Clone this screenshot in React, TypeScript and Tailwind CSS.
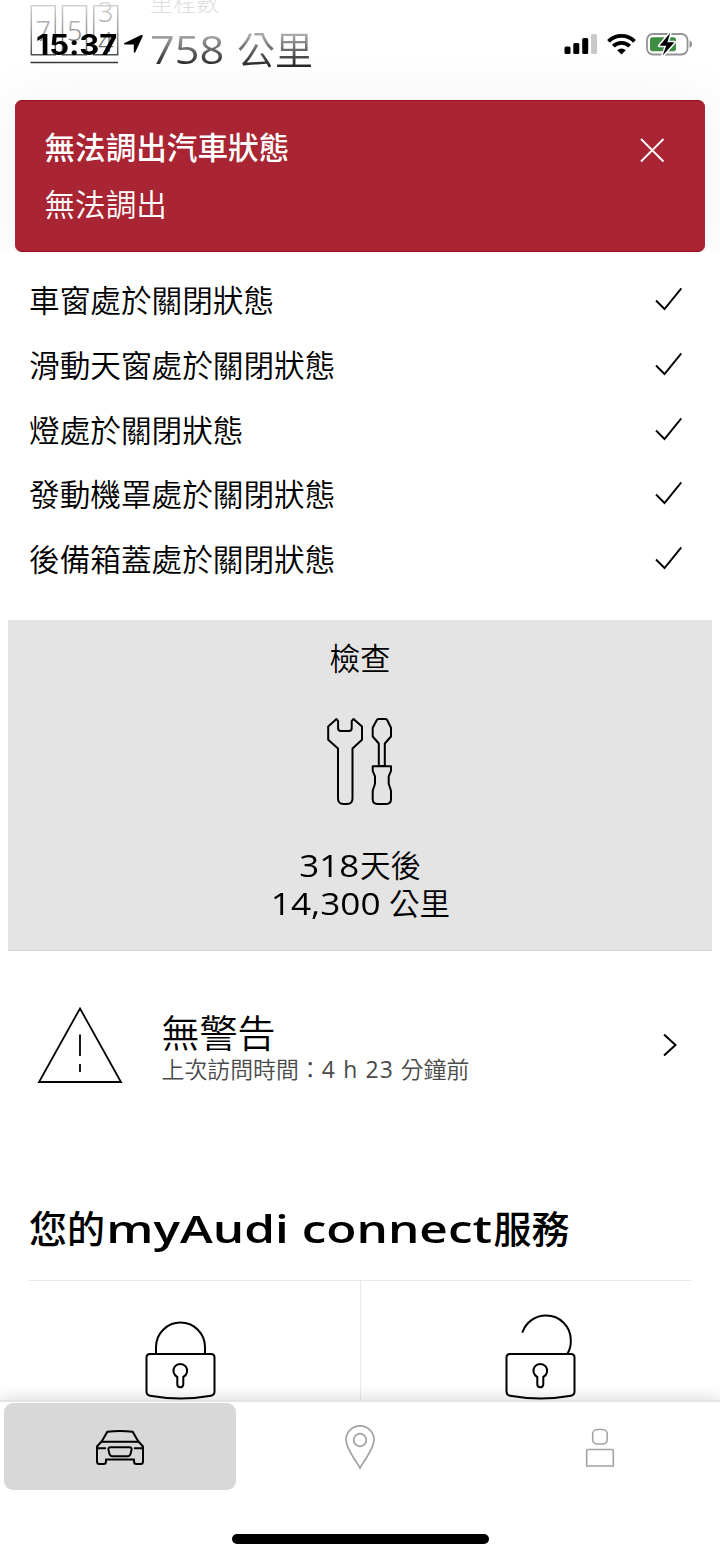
import type { ReactNode } from "react";

const statusItems = [
  "車窗處於關閉狀態",
  "滑動天窗處於關閉狀態",
  "燈處於關閉狀態",
  "發動機罩處於關閉狀態",
  "後備箱蓋處於關閉狀態",
];

function StatusBar() {
  return (
    <div className="absolute inset-x-0 top-0 flex h-[88px] items-center pl-[36px] pr-[27px]">
      <span className="w-[82px] whitespace-nowrap font-['Inter',sans-serif] text-[28px] font-bold leading-none text-black">
        <span className="mt-[2px] inline-block origin-left scale-x-[1.110] tracking-[-0.100px]">15:37</span>
      </span>
      <svg className="ml-[5px]" width="21" height="20" viewBox="0 0 21 20">
        <path
          d="M1.600 9.100 18.200 1.100c1-.4 1.800.3 1.400 1.300L12.400 18c-.5 1.100-1.600.9-1.600-.2v-7.200H1.900c-1.100 0-1.300-1-.3-1.500Z"
          fill="#000"
        />
      </svg>
      <svg className="ml-auto" width="33" height="22" viewBox="0 0 33 22">
        <rect x="0.500" y="13.500" width="6" height="7.500" rx="1.500" />
        <rect x="9.300" y="10" width="6" height="11" rx="1.500" />
        <rect x="18.200" y="5" width="6" height="16" rx="1.500" />
        <rect x="27" y="1" width="6" height="20" rx="1.500" fill="#c9c9c9" />
      </svg>
      <svg className="ml-[10px]" width="29" height="22" viewBox="0 0 29 22" fill="none" stroke="#000" strokeWidth="3.900">
        <path d="M1.500 8.300a18.400 18.400 0 0 1 26 0" />
        <path d="M6.300 13.200a11.700 11.700 0 0 1 16.400 0" />
        <path d="m14.500 21.500-4.300-4.300a6.100 6.100 0 0 1 8.600 0Z" fill="#000" stroke="none" />
      </svg>
      <svg className="ml-[10px]" width="47" height="26" viewBox="0 0 47 26">
        <rect x="1" y="3" width="40.500" height="20.500" rx="6" fill="#fff" stroke="#949494" strokeWidth="1.800" />
        <rect x="4" y="6.200" width="26" height="14" rx="2.800" fill="#3f8d42" />
        <path d="M43.500 9.500c3.500 1.500 3.500 6 0 7.500Z" fill="#949494" />
        <path
          d="M24.300 1.800 13.500 14.800h6.700l-3.500 9.700 11.800-13.200h-7.100Z"
          fill="#000"
          stroke="#fff"
          strokeWidth="3"
          strokeLinejoin="round"
          paintOrder="stroke"
        />
      </svg>
    </div>
  );
}

function Odometer() {
  return (
    <svg className="shrink-0" width="90" height="68" viewBox="0 0 90 68" fill="none">
      <defs>
        <linearGradient id="fade" gradientUnits="userSpaceOnUse" x1="0" y1="0" x2="0" y2="64">
          <stop offset="0" stopColor="#ddd" />
          <stop offset="0.500" stopColor="#999" />
          <stop offset="1" stopColor="#333" />
        </linearGradient>
      </defs>
      <g stroke="url(#fade)" strokeWidth="1.500">
        <path d="M1.300 5.800h24v49h-24ZM32.500 5.800h24v49h-24ZM63.700 5.800h24v49h-24Z" />
        <path d="M0.500 62.500h87.500" />
      </g>
      <g fill="url(#fade)" fontFamily="Noto Sans, sans-serif" fontSize="27" fontWeight="300">
        <text x="5.500" y="41">7</text>
        <text x="37" y="41">5</text>
        <text x="68" y="22">3</text>
        <text x="68" y="52">4</text>
      </g>
    </svg>
  );
}

function Mileage() {
  return (
    <div className="flex h-[100px] pl-[30px]">
      <Odometer />
      <div className="ml-[30px] flex flex-col">
        <span className="-mt-[11px] h-[27px] text-[23px] font-light leading-[27px] text-[#dedede]">里程數</span>
        <div className="mt-[10px] flex h-[46px] items-center text-[38px] leading-[46px]">
          <span className="w-[65px] origin-left scale-x-[1.140] bg-linear-to-b from-[#aaa] from-20% to-[#222] to-90% bg-clip-text font-['Open_Sans',sans-serif] font-normal text-transparent">
            758
          </span>
          <span className="ml-[22px] bg-linear-to-b from-[#aaa] from-20% to-[#222] to-90% bg-clip-text font-[350] text-transparent">
            公里
          </span>
        </div>
      </div>
    </div>
  );
}

function ErrorBanner() {
  return (
    <div className="mx-[15px] flex h-[152px] justify-between rounded-[7px] border-y border-[#9c0c1c] bg-[#a92533] pl-[29.500px] pr-[40px] text-white shadow-[0_0_60px_rgba(0,0,0,0.060)]">
      <div>
        <h2 className="mt-[23px] text-[30.600px] font-medium leading-[46px]">無法調出汽車狀態</h2>
        <p className="mt-[11px] text-[30.600px] font-[350] leading-[46px]">無法調出</p>
      </div>
      <svg className="mt-[36px]" width="26" height="26" viewBox="0 0 26 26" fill="none" stroke="#fff" strokeWidth="1.800">
        <path d="m2 2 22.500 22.500M24.500 2 2 24.500" />
      </svg>
    </div>
  );
}

function CheckMark() {
  return (
    <svg className="-mt-[2px]" width="28" height="24" viewBox="0 0 28 24" fill="none" stroke="#000" strokeWidth="1.900">
      <path d="m1 13.500 8.500 8.500L26.300 1.300" />
    </svg>
  );
}

function Inspection() {
  return (
    <section className="mx-[8px] mt-[29px] flex h-[331px] flex-col items-center border-b border-[#d6d6d6] bg-[#e4e4e4] text-[30.600px] font-[350] text-black">
      <h3 className="mt-[15px] h-[46px] font-[350] leading-[46px]">檢查</h3>
      <svg className="mt-[36px]" width="68" height="90" viewBox="0 0 68 90" fill="none" stroke="#000" strokeWidth="2" strokeLinejoin="round">
        <path d="M10.500 2 2.200 9.600v13.200L12 31.500v50q0 5.500 5.500 5.500h3.500q5.500 0 5.500-5.500v-50l9.500-8.700V9.600L27.500 2l-1.800 2.200v7q0 2.800-2.800 2.800h-8q-2.800 0-2.800-2.800v-7Z" />
        <path d="M52.500 2h7q1.200 0 1.800 1.200l3.700 7.500v8.800l-6.200 7V49h-6V26.500l-6.100-7v-8.800l4-7.500q.6-1.200 1.800-1.200Z" />
        <path d="M46.700 49.300H65v4.500l-2.300 5.500v7.500l2.300 7v8.500q0 4.700-4.700 4.700h-8.900q-4.700 0-4.700-4.700v-8.500l2.300-7v-7.500l-2.300-5.500Z" />
      </svg>
      <div className="mt-[39px] flex h-[38px] items-center leading-[38px]">
        <span className="flex w-[61px] justify-center">
          <span className="scale-x-[1.140] font-['Open_Sans',sans-serif] font-normal">318</span>
        </span>
        天後
      </div>
      <div className="flex h-[38px] items-center leading-[38px]">
        <span className="flex w-[111px] justify-center">
          <span className="scale-x-[1.150] font-['Open_Sans',sans-serif] font-normal">14,300</span>
        </span>
        <span className="ml-[8px]">公里</span>
      </div>
    </section>
  );
}

function Warnings() {
  return (
    <section className="mt-[53px] flex h-[82px] items-center pl-[37px] pr-[42px]">
      <svg className="-mt-px" width="86" height="80" viewBox="0 0 86 80" fill="none" stroke="#000" strokeWidth="1.800">
        <path d="M43 3.500 84 77H2Z" />
        <path d="M43 29.500V51M43 59v8" />
      </svg>
      <div className="ml-[38.500px] flex-1 text-black">
        <h3 className="mt-[4px] text-[38px] font-[350] leading-[46px]">無警告</h3>
        <p className="flex text-[22.900px] font-[350] leading-[30px] text-[#4a4a4a]">
          上次訪問時間：
          <span className="w-[79px] whitespace-nowrap font-['Open_Sans',sans-serif] font-normal tracking-[1.200px]">4 h 23</span>
          分鐘前
        </p>
      </div>
      <svg width="16" height="24" viewBox="0 0 16 24" fill="none" stroke="#000" strokeWidth="2">
        <path d="m2 1.500 11.500 10.500L2 22.500" />
      </svg>
    </section>
  );
}

function LockBody() {
  return (
    <>
      <path d="M6 41h61q3.500 0 3.500 3.500v34q0 3.500-3.500 4.200-30.500 5.500-61 0-3.500-.7-3.500-4.200v-34Q2.500 41 6 41Z" />
      <path d="M33.300 64a6.900 6.900 0 1 1 6 0v7.300a3 3 0 0 1-6 0Z" />
    </>
  );
}

function LockIcon({ children }: { children: ReactNode }) {
  return (
    <svg width="72" height="88" viewBox="0 0 72 88" fill="none" stroke="#000" strokeWidth="2">
      {children}
      <LockBody />
    </svg>
  );
}

function Services() {
  return (
    <section className="mx-[29px] mt-[114px]">
      <h2 className="flex h-[56px] items-center whitespace-nowrap text-[38px] font-medium leading-[56px] text-black">
        您的
        <span className="w-[388.500px]">
          <span className="inline-block origin-left scale-x-[1.320] pl-[1px] font-['Open_Sans',sans-serif] text-[37.500px] font-[650]">
            myAudi connect
          </span>
        </span>
        服務
      </h2>
      <div className="mt-[24px] grid h-[150px] grid-cols-2 border-t border-[#e6e6e6]">
        <div className="flex justify-center pr-[29px] pt-[32px]">
          <LockIcon>
            <path d="M12 41v-7a24.500 24.500 0 0 1 49 0v7" />
          </LockIcon>
        </div>
        <div className="flex justify-center border-l border-[#eaeaea] pl-[27px] pt-[32px]">
          <LockIcon>
            <path d="M18.300 19.600A24.800 24.800 0 0 1 42.300 2.500 24.500 24.500 0 0 1 66.800 27 24.800 24.800 0 0 1 63.300 41" />
          </LockIcon>
        </div>
      </div>
    </section>
  );
}

function BottomNav() {
  return (
    <nav className="relative h-[159px] shrink-0 border-t-2 border-[#e4e4e4] bg-white shadow-[0_-3px_14px_rgba(0,0,0,0.130)]">
      <div className="grid h-[90px] grid-cols-3">
        <div className="ml-[4px] mr-[4px] mt-px flex h-[87px] items-center justify-center rounded-[9px] bg-[#d8d8d8]">
          <svg className="mt-[3px]" width="50" height="36" viewBox="0 0 50 36" fill="none" stroke="#000" strokeWidth="2" strokeLinejoin="round">
            <path d="M2 16.500 7 11 12.300 1.800q12.700-1.500 25.400 0L43 11l5 5.500v15q0 2.500-2.500 2.500h-4q-2.500 0-2.500-2.500V29.500H11v2Q11 34 8.500 34h-4Q2 34 2 31.500Z" />
            <path d="M7 11.800h36M2 18.300h9M39 18.300h9" />
            <path d="M15.500 17.300h19q2.700 0 2 2.700l-1 4q-.7 2.300-3 2.300h-15q-2.300 0-3-2.300l-1-4q-.7-2.700 2-2.700Z" />
          </svg>
        </div>
        <div className="flex justify-center pr-px pt-[22px]">
          <svg width="32" height="46" viewBox="0 0 32 46" fill="none" stroke="#a3a3a3" strokeWidth="1.700">
            <path d="M16 44C11.500 36 2 25 2 15.800a14 14 0 0 1 28 0C30 25 20.500 36 16 44Z" />
            <circle cx="16" cy="16" r="6.300" />
          </svg>
        </div>
        <div className="flex justify-center pt-[26px]">
          <svg width="30" height="40" viewBox="0 0 30 40" fill="none" stroke="#a3a3a3" strokeWidth="1.600">
            <rect x="7.700" y="1.500" width="14.500" height="14.500" rx="4.500" />
            <path d="M3 21.500h24q1.300 0 1.300 1.300V38H1.700V22.800q0-1.300 1.300-1.300Z" />
          </svg>
        </div>
      </div>
      <div className="mx-auto mt-[42px] h-[10px] w-[257px] rounded-full bg-black" />
    </nav>
  );
}

export default function App() {
  return (
    <div className="relative flex h-[1559px] w-[720px] flex-col overflow-hidden bg-white font-['Noto_Sans','Noto_Sans_CJK_TC',sans-serif]">
      <main className="min-h-0 flex-1 overflow-hidden">
        <div className="h-[252px] overflow-hidden">
          <Mileage />
          <ErrorBanner />
        </div>
        <ul className="mt-[16px] pl-[29px] pr-[37px]">
          {statusItems.map((item) => (
            <li key={item} className="flex h-[64.700px] items-center justify-between text-[30.650px] font-[350] leading-[46px] text-black">
              <span>{item}</span>
              <CheckMark />
            </li>
          ))}
        </ul>
        <Inspection />
        <Warnings />
        <Services />
      </main>
      <BottomNav />
      <StatusBar />
    </div>
  );
}
